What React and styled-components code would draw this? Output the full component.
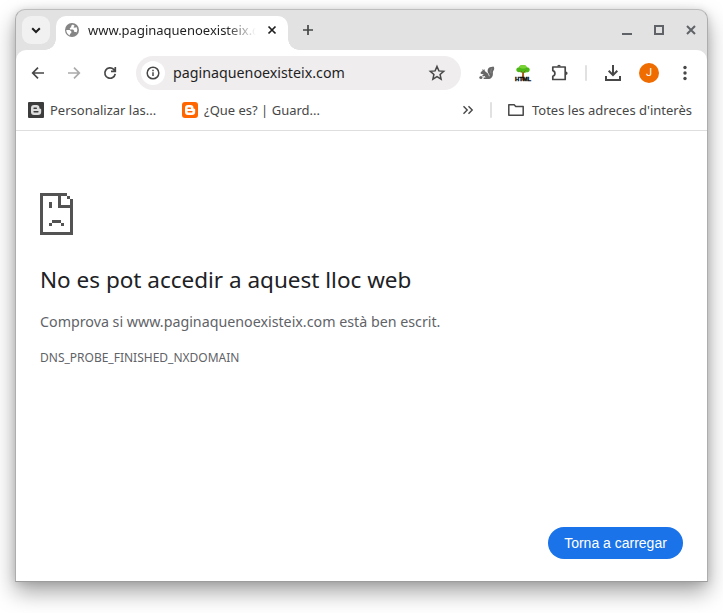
import React from "react";
import styled, { createGlobalStyle } from "styled-components";

const Global = createGlobalStyle`
  *, *::before, *::after { box-sizing: border-box; }
  body { margin: 0; background: #fff; overflow: hidden; font-family: "Noto Sans", sans-serif; }
  svg { display: block; flex: none; }
`;

const Desktop = styled.div`
  height: 613px;
  width: 723px;
  padding: 9px 15px 31px;
  overflow: hidden;
`;

const Window = styled.div`
  width: 693px;
  height: 573px;
  display: flex;
  flex-direction: column;
  border: 1px solid #adadad;
  border-top-color: #bdbdbd;
  border-bottom-color: #9c9c9c;
  border-radius: 10px 10px 0 0;
  background: #e2e2e2;
  box-shadow: 0 10px 22px rgba(0, 0, 0, 0.36), 0 1px 8px rgba(0, 0, 0, 0.12);
`;

const TabStrip = styled.header`
  height: 40px;
  flex: none;
  display: flex;
  align-items: center;
  padding-left: 6px;
  color: #5f6368;
`;

const TabSearch = styled.button`
  width: 28px;
  height: 28px;
  padding: 0;
  border: 0;
  border-radius: 9px;
  background: #f1f1f1;
  color: #1f1f1f;
  display: grid;
  place-items: center;
`;

const Tab = styled.div`
  position: relative;
  align-self: flex-end;
  width: 232px;
  height: 34px;
  margin-left: 6px;
  padding: 0 9px 6px 9px;
  display: flex;
  align-items: center;
  background: #fff;
  border-radius: 10px 10px 0 0;

  &::before,
  &::after {
    content: "";
    position: absolute;
    bottom: 0;
    width: 11px;
    height: 11px;
  }
  &::before {
    left: -11px;
    background: radial-gradient(circle at 0 0, transparent 10.5px, #fff 11px);
  }
  &::after {
    right: -11px;
    background: radial-gradient(circle at 100% 0, transparent 10.5px, #fff 11px);
  }
`;

const TabTitle = styled.span`
  width: 168px;
  margin-left: 9px;
  font-size: 13px;
  line-height: 18px;
  color: #1f1f1f;
  white-space: nowrap;
  overflow: hidden;
  mask-image: linear-gradient(to right, #000 138px, transparent 168px);
`;

const TabClose = styled.span`
  margin-left: 11px;
  color: #1f1f1f;
`;

const NewTab = styled.span`
  margin-left: 12px;
  color: #444746;
`;

const WindowControls = styled.div`
  margin-left: auto;
  margin-right: 10px;
  display: flex;
  gap: 20px;
`;

const Toolbar = styled.nav`
  height: 46px;
  flex: none;
  display: flex;
  align-items: center;
  padding-left: 4px;
  background: #fff;
  border-radius: 10px 10px 0 0;
`;

const ToolButton = styled.span`
  width: 36px;
  height: 34px;
  flex: none;
  display: grid;
  place-items: center;
  color: ${(p) => (p.$disabled ? "#aaa" : "#474747")};
`;

const AddressBar = styled.div`
  width: 325px;
  height: 34px;
  margin: 0 8px;
  padding: 0 15px 0 5px;
  display: flex;
  align-items: center;
  border-radius: 17px;
  background: #efedee;
  color: #474747;
`;

const SiteInfo = styled.span`
  width: 24px;
  height: 24px;
  border-radius: 50%;
  background: #fff;
  display: grid;
  place-items: center;
`;

const Address = styled.span`
  flex: 1;
  margin-left: 8px;
  font-size: 14.25px;
  line-height: 20px;
  color: #1f1f1f;
`;

const Divider = styled.span`
  width: 2px;
  height: 16px;
  border-radius: 1px;
  background: #e1e1e1;
  margin: 0 ${(p) => p.$gap}px;
`;

const Avatar = styled.span`
  width: 20px;
  height: 20px;
  border-radius: 50%;
  background: #ef6c00;
  color: #fff;
  font: 11px/20px Roboto, sans-serif;
  text-align: center;
`;

const BookmarksBar = styled.div`
  height: 35px;
  flex: none;
  display: flex;
  align-items: center;
  padding: 0 15px 6px 12px;
  background: #fff;
  border-bottom: 1px solid #dedede;
  color: #474747;
  font-size: 13px;
`;

const Bookmark = styled.span`
  display: flex;
  align-items: center;
  gap: ${(p) => p.$gap || 6}px;
  width: ${(p) => (p.$width ? `${p.$width}px` : "auto")};
  line-height: 18px;
  white-space: nowrap;
`;

const Overflow = styled.span`
  margin-left: auto;
`;

const Page = styled.main`
  flex: 1;
  display: flex;
  flex-direction: column;
  padding: 62px 24px 22px;
  background: #fff;
  color: #5f6368;
`;

const Heading = styled.h1`
  margin: 28px 0 0;
  font-size: 22.5px;
  line-height: 34px;
  font-weight: 400;
  color: #202124;
`;

const Message = styled.p`
  margin: 14px 0 0;
  font-size: 14.25px;
  line-height: 22px;
`;

const ErrorCode = styled.div`
  margin-top: 16px;
  font-size: 12px;
  line-height: 18px;
`;

const Reload = styled.button`
  width: 135px;
  height: 32px;
  margin-top: auto;
  align-self: flex-end;
  padding: 0;
  border: 0;
  border-radius: 16px;
  background: #1a73e8;
  color: #fff;
  font: 14px/32px "Liberation Sans", Arial, sans-serif;
`;

const Stroke = ({ size = 16, width = 1.7, children }) => (
  <svg width={size} height={size} viewBox={`0 0 ${size} ${size}`} fill="none" stroke="currentColor" strokeWidth={width}>
    {children}
  </svg>
);

const Globe = () => (
  <svg width="14" height="14" viewBox="0 0 14 14">
    <circle cx="7" cy="7" r="7" fill="#858585" />
    <path d="M7.8 1.4 6.2 2.7v1.5l-1.4.7.2 1.5h3l1.2 1.4v1.1h1.6l.8.7a5.8 5.8 0 0 0-.1-5.7L10 4.8 8.4 4.3l1.3-1.5zM1.3 7h3.3l1.7 1.3v1.6L4.9 11v1.4A5.8 5.8 0 0 1 1.3 7z" fill="#fff" />
  </svg>
);

const Blogger = ({ color, ink, radius }) => (
  <svg width="16" height="16" viewBox="0 0 16 16">
    <rect width="16" height="16" rx={radius} fill={color} />
    <path d="M6 3h2.6A2.8 2.8 0 0 1 11.4 5.8c0 .7.4 1 1 1 .5 0 .8.3.8.8v2.2A3.2 3.2 0 0 1 10 13H6a3 3 0 0 1-3-3V6a3 3 0 0 1 3-3z" fill={ink} />
    <path d="M6.1 6.2h2.2M6.1 9.8h3.8" stroke={color} strokeWidth="1.5" strokeLinecap="round" />
  </svg>
);

const Squirrel = () => (
  <svg width="16" height="16" viewBox="0 0 16 16" fill="#686868">
    <path d="M10.6 11.2c-.1-2.4-2-3-2-5.3 0-2.3 1.6-3.9 3.5-3.9.9 0 1.6-.3 2.3-.5 1 .8 1.1 2.7.3 3.8-.8 1-.9 1.8-.8 2.8.2 2.8-.8 5.5-3.8 5.9H4.6v-1.5h2.1l-1.2-1.6-1.8.5-.5-.9 1.6-1.3-2.2-.1C1.4 9 1.2 7.6 2.2 6.7l1.3-1-.1-1.6 1.2.9.7-1 .5 1.8c.3.7.7 1 1.5 1.4 1.4.8 2.5 2 2.6 4z" />
    <circle cx="1.9" cy="12.5" r="1.6" />
    <path d="M13 3.3c-1.3 1.7-1.4 3.4-.9 5.1" fill="none" stroke="#a2a2a2" strokeWidth=".6" />
  </svg>
);

const HtmlTree = () => (
  <svg width="18" height="18" viewBox="0 0 18 18">
    <path d="M8.2 8h1.7l.4 8.5H7.8z" fill="#a75a16" />
    <path d="M9 1c2 0 3.3.9 3.7 2.2 2 .1 3 1.2 3 2.5 0 1.7-1.5 2.8-3.4 2.6C11 9.3 7.4 9.2 6 8.1 3.9 8.5 2.3 7.4 2.3 5.8c0-1.4 1.3-2.4 2.8-2.5C5.4 1.8 7 1 9 1z" fill="#4cb817" />
    <path d="M9 1c2 0 3.3.9 3.7 2.2-1 1.6-5.5 2-7.6.1C5.4 1.8 7 1 9 1z" fill="#79d333" />
    <path d="m9 9.5-2-2.5m2 2 2.5-2.5" stroke="#8c651a" />
    <text x="1" y="16.8" fontFamily="Liberation Sans, sans-serif" fontSize="5.8" fontWeight="700" textLength="16" stroke="#111" strokeWidth=".4">HTML</text>
  </svg>
);

const SadPage = () => (
  <svg width="33" height="42" viewBox="0 0 11 14" fill="#535353" shapeRendering="crispEdges">
    <path d="M0 0h9v1h1v1h1v12H0zM1 1v12h9V5H6V1zM7 1v3h3V2H9V1zM3 3h1v2H3zM4 9h3v1H4zM3 10h1v1H3zM7 10h1v1H7z" fillRule="evenodd" />
  </svg>
);

export default function App() {
  return (
    <>
      <Global />
      <Desktop>
        <Window>
          <TabStrip>
            <TabSearch aria-label="Cerca pestanyes">
              <Stroke size={12} width={2}><path d="m2.2 4.2 3.8 3.8 3.8-3.8" /></Stroke>
            </TabSearch>
            <Tab>
              <Globe />
              <TabTitle>www.paginaquenoexisteix.com</TabTitle>
              <TabClose>
                <Stroke size={10} width={1.7}><path d="m1.5 1.5 7 7m0-7-7 7" /></Stroke>
              </TabClose>
            </Tab>
            <NewTab>
              <Stroke><path d="M8 3v10M3 8h10" /></Stroke>
            </NewTab>
            <WindowControls>
              <Stroke size={12} width={2}><path d="M1 10h10" /></Stroke>
              <Stroke size={12} width={2}><path d="M2 2h8v8H2z" /></Stroke>
              <Stroke size={12} width={2}><path d="m2 2 8 8m0-8-8 8" /></Stroke>
            </WindowControls>
          </TabStrip>
          <Toolbar>
            <ToolButton>
              <Stroke><path d="M14 8H3M8 2.7 2.7 8 8 13.3" /></Stroke>
            </ToolButton>
            <ToolButton $disabled>
              <Stroke><path d="M2 8h11M8 2.7 13.3 8 8 13.3" /></Stroke>
            </ToolButton>
            <ToolButton>
              <Stroke><path d="M13.2 8.8A5.2 5.2 0 1 1 11.7 4.3l1.3 1.4M13.3 2v4.3H9" /></Stroke>
            </ToolButton>
            <AddressBar>
              <SiteInfo>
                <Stroke width={1.5}><circle cx="8" cy="8" r="5.8" /><path d="M8 7.2V11M8 4.7v1.5" /></Stroke>
              </SiteInfo>
              <Address>paginaquenoexisteix.com</Address>
              <Stroke size={18} width={1.5}>
                <path d="m9 2.5 1.9 4.4 4.8.4-3.6 3.2 1 4.7L9 12.7l-4.1 2.5 1-4.7-3.6-3.2 4.8-.4z" />
              </Stroke>
            </AddressBar>
            <ToolButton><Squirrel /></ToolButton>
            <ToolButton><HtmlTree /></ToolButton>
            <ToolButton>
              <Stroke size={18} width={1.7}>
                <path d="M2.8 3h12.4v12.5H2.8v-3.3c2.8-.8 2.8-4.8 0-5.6z" strokeLinejoin="round" />
                <path d="M7.2 2.6a1.8 1.8 0 0 1 3.6 0zM15.8 7.5a1.8 1.8 0 0 1 0 3.6z" fill="currentColor" stroke="none" />
              </Stroke>
            </ToolButton>
            <Divider $gap={8} />
            <ToolButton>
              <Stroke size={18} width={2}><path d="M9 1v9.5M4.7 6.8 9 11.1l4.3-4.3M2 12v4h14v-4" /></Stroke>
            </ToolButton>
            <ToolButton><Avatar>J</Avatar></ToolButton>
            <ToolButton>
              <svg width="4" height="16" viewBox="0 0 4 16" fill="currentColor">
                <circle cx="2" cy="2.5" r="1.7" /><circle cx="2" cy="8" r="1.7" /><circle cx="2" cy="13.5" r="1.7" />
              </svg>
            </ToolButton>
          </Toolbar>
          <BookmarksBar>
            <Bookmark $width={154}>
              <Blogger color="#3c3c3c" ink="#ddd" radius="1" />
              Personalizar las...
            </Bookmark>
            <Bookmark>
              <Blogger color="#ff6600" ink="#fff" radius="3" />
              ¿Que es? | Guard...
            </Bookmark>
            <Overflow>
              <Stroke size={12} width={1.4}><path d="m1.5 2.3 3.7 3.7-3.7 3.7M6.5 2.3 10.2 6 6.5 9.7" /></Stroke>
            </Overflow>
            <Divider $gap={16} />
            <Bookmark $gap={8}>
              <Stroke width={1.5}><path d="M.8 2.8h5.4l1.5 1.6h7.5v8.8H.8z" strokeLinejoin="round" /></Stroke>
              Totes les adreces d'interès
            </Bookmark>
          </BookmarksBar>
          <Page>
            <SadPage />
            <Heading>No es pot accedir a aquest lloc web</Heading>
            <Message>Comprova si www.paginaquenoexisteix.com està ben escrit.</Message>
            <ErrorCode>DNS_PROBE_FINISHED_NXDOMAIN</ErrorCode>
            <Reload>Torna a carregar</Reload>
          </Page>
        </Window>
      </Desktop>
    </>
  );
}
